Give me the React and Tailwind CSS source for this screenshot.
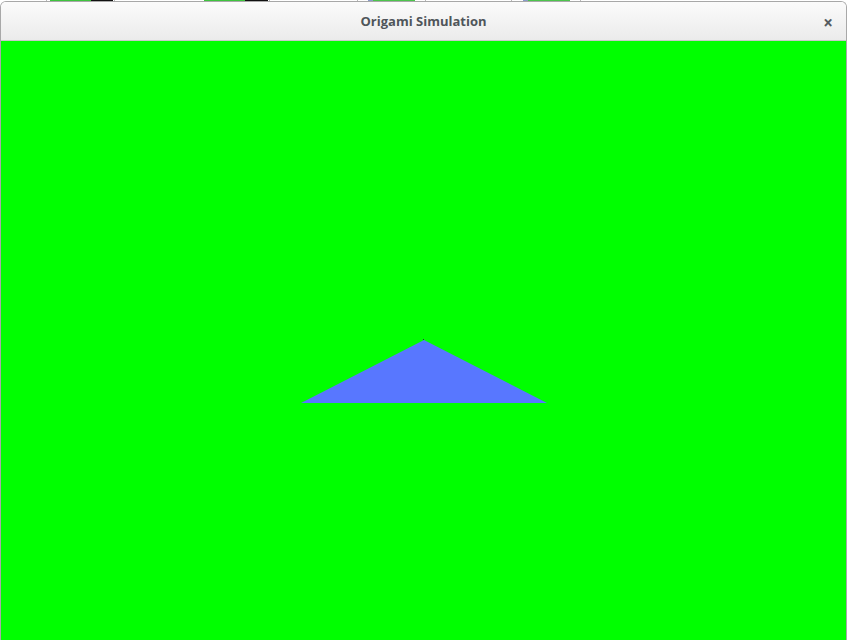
import React from "react";

const segs = [
  ["w-[46px]", "bg-white"],
  ["w-[1px]", "bg-[#b8b8b8]"],
  ["w-[3px]", "bg-white"],
  ["w-[41px]", "bg-[#3ec43e]"],
  ["w-[22px]", "bg-[#111111]"],
  ["w-[1px]", "bg-white"],
  ["w-[1px]", "bg-[#b8b8b8]"],
  ["w-[89px]", "bg-white"],
  ["w-[41px]", "bg-[#3ec43e]"],
  ["w-[23px]", "bg-[#111111]"],
  ["w-[1px]", "bg-white"],
  ["w-[1px]", "bg-[#b8b8b8]"],
  ["w-[87px]", "bg-white"],
  ["w-[1px]", "bg-[#b8b8b8]"],
  ["w-[10px]", "bg-white"],
  ["w-[5px]", "bg-[#8a9bc8]"],
  ["w-[42px]", "bg-[#4cc44c]"],
  ["w-[10px]", "bg-white"],
  ["w-[1px]", "bg-[#b8b8b8]"],
  ["w-[85px]", "bg-white"],
  ["w-[1px]", "bg-[#b8b8b8]"],
  ["w-[11px]", "bg-white"],
  ["w-[5px]", "bg-[#8a9bc8]"],
  ["w-[42px]", "bg-[#4cc44c]"],
  ["w-[10px]", "bg-white"],
  ["w-[1px]", "bg-[#b8b8b8]"],
];

function TopStrip() {
  return (
    <div className="flex h-[2px] w-full bg-white shrink-0">
      {segs.map(([w, c], i) => (
        <div key={i} className={`${w} ${c} h-full shrink-0`} />
      ))}
    </div>
  );
}

export default function App() {
  return (
    <div
      className="w-[847px] h-[640px] bg-white flex flex-col overflow-hidden"
      style={{ fontFamily: '"Open Sans", "DejaVu Sans", sans-serif' }}
    >
      <TopStrip />
      <div className="flex-1 flex flex-col border border-b-0 border-[#a8a8a8] rounded-t-[6px] overflow-hidden -mt-[1px] relative z-10">
        <div className="h-[39px] shrink-0 flex items-center bg-gradient-to-b from-[#fbfbfb] to-[#ebebeb] border-b border-[#c8c8c8] pl-[33px] pr-[13px]">
          <span className="flex-1 text-center text-[13px] font-bold text-[#4f555a] pt-[1px]">
            Origami Simulation
          </span>
          <span className="w-[20px] text-right text-[17px] leading-none font-bold text-[#555b60] pt-[2px]">
            ×
          </span>
        </div>
        <div className="flex-1 bg-[#00ff00]">
          <svg width="843" height="599" viewBox="0 0 843 599" className="block">
            <polygon points="423,299 300,362 546,362" fill="#5877ff" />
            <rect x="422" y="298" width="1" height="1" fill="#2a3a40" />
          </svg>
        </div>
      </div>
    </div>
  );
}
